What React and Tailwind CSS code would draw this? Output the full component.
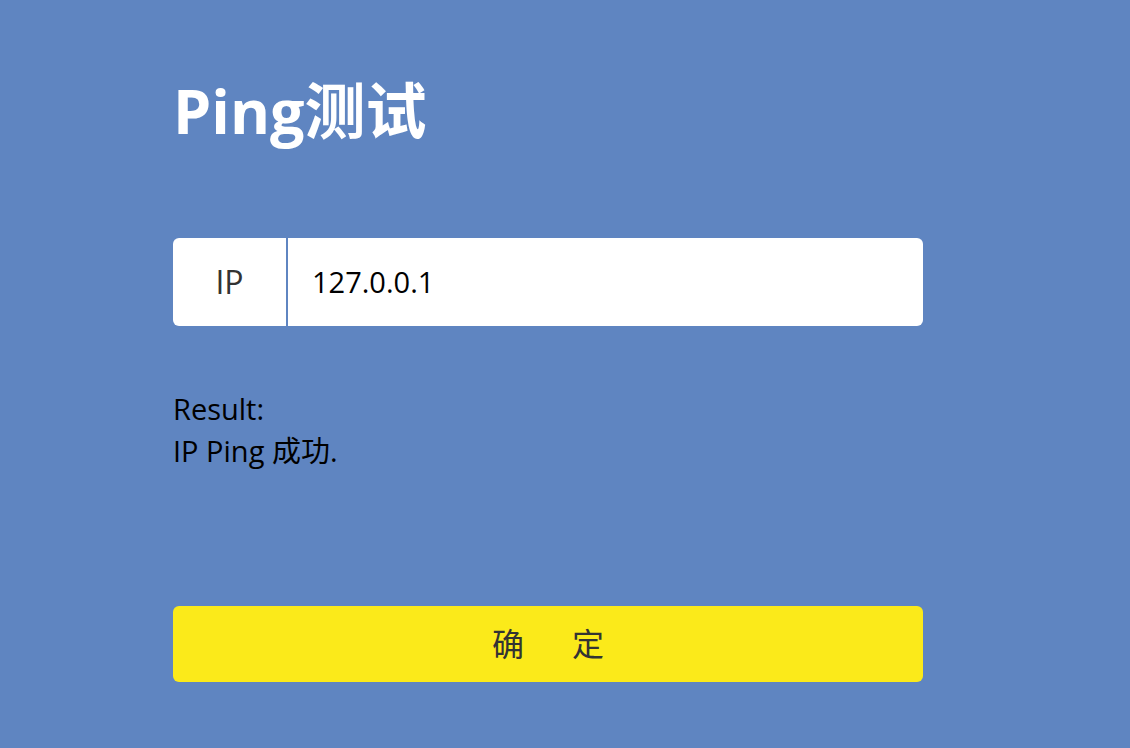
export default function App() {
  return (
    <div
      className="min-h-[748px] w-full bg-[#5f85c1] text-black"
      style={{ fontFamily: '"Open Sans", "Noto Sans CJK SC", sans-serif' }}
    >
      <div className="ml-[173px] w-[750px] pt-[70px]">
        <h1 className="text-[61px] leading-[82px] font-bold text-white">Ping测试</h1>

        <div className="mt-[86px] flex h-[88px] overflow-hidden rounded-[6px] bg-white">
          <div className="flex w-[115px] items-center justify-center border-r-2 border-[#5f85c1] text-[32px] text-[#333]">
            IP
          </div>
          <div className="flex flex-1 items-center pl-[24px] text-[29px] text-black">127.0.0.1</div>
        </div>

        <div className="mt-[62px] text-[29px] leading-[42px]">
          <div>Result:</div>
          <div>IP Ping 成功.</div>
        </div>

        <button
          type="button"
          className="mt-[134px] flex h-[76px] w-full items-center justify-center rounded-[6px] bg-[#fbea1a] text-[32px] text-[#333]"
        >
          确<span className="inline-block w-[48px]"></span>定
        </button>
      </div>
    </div>
  );
}
